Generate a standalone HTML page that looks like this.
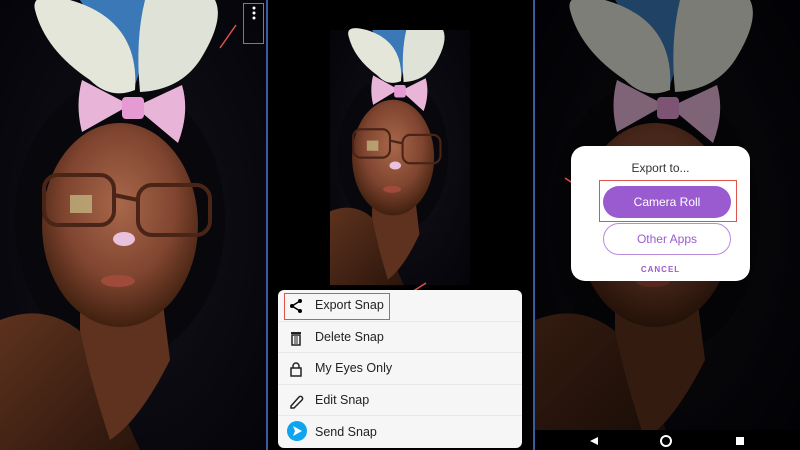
<!DOCTYPE html>
<html><head><meta charset="utf-8"><style>
*{margin:0;padding:0;box-sizing:border-box}
body{width:800px;height:450px;overflow:hidden;background:#000;font-family:"Liberation Sans",sans-serif;position:relative}
svg{position:absolute;left:0;top:0}
.menu{position:absolute;left:278px;top:290px;width:244px;height:158px;background:#f6f6f6;border-radius:6px}
.mi{height:31.6px;display:flex;align-items:center;font-size:12.5px;color:#222;border-bottom:1px solid #e8e8e8;position:relative}
.mi span{position:absolute;left:37px}
.ic{position:absolute;left:10px;top:8px}
.dlg{position:absolute;left:571px;top:146px;width:179px;height:135px;background:#fff;border-radius:14px;text-align:center}
.dlg .t{font-size:12px;color:#333;margin-top:15px}
.btn{position:absolute;left:32px;width:128px;height:32px;border-radius:16px;font-size:12px;line-height:32px}
.b1{top:40px;background:#9b5bd0;color:#fff}
.b2{top:77px;border:1px solid #b88ad9;color:#9b5bd0;line-height:30px}
.cancel{position:absolute;top:119px;width:100%;font-size:8px;font-weight:bold;letter-spacing:1px;color:#9b5bd0}
.red{position:absolute;border:1.5px solid #e0534a}
</style></head><body>
<svg width="800" height="450">
<defs>
<radialGradient id="skin" cx="50%" cy="40%" r="60%"><stop offset="0" stop-color="#a8674a"/><stop offset="0.6" stop-color="#804530"/><stop offset="1" stop-color="#40200f"/></radialGradient>
<linearGradient id="chest" x1="0" y1="0" x2="1" y2="1"><stop offset="0" stop-color="#5e321e"/><stop offset="1" stop-color="#2a150b"/></linearGradient>
<radialGradient id="bg" cx="50%" cy="50%" r="70%"><stop offset="0" stop-color="#141218"/><stop offset="1" stop-color="#04040a"/></radialGradient>
<g id="face">
<rect x="0" y="0" width="266" height="450" fill="url(#bg)"/>
<ellipse cx="120" cy="220" rx="105" ry="140" fill="#08070c"/>
<path d="M0 320 Q50 300 90 340 L140 450 L0 450Z" fill="url(#chest)"/>
<path d="M80 280 L160 280 L170 360 Q140 420 110 440 Q90 380 80 330Z" fill="#5e321e"/>
<ellipse cx="120" cy="225" rx="78" ry="102" fill="url(#skin)"/>
<path d="M80 0 L160 0 L150 40 L135 85 Z" fill="#3a78b8"/>
<path d="M35 10 Q30 -10 70 0 Q140 20 135 90 Q110 100 90 80 Q45 50 35 10Z" fill="#e4e6da"/>
<path d="M145 0 L215 0 Q225 20 200 60 Q180 90 140 92 Q135 40 145 0Z" fill="#dfe2d6"/>
<path d="M82 80 L130 105 L82 132 Q75 105 82 80Z" fill="#e8b4d8"/>
<path d="M182 85 L135 107 L178 143 Q190 112 182 85Z" fill="#e8b4d8"/>
<rect x="122" y="97" width="22" height="22" rx="4" fill="#e59ad4"/>
<g fill="none" stroke="#4a2416" stroke-width="4"><rect x="44" y="175" width="70" height="50" rx="14"/><rect x="138" y="185" width="72" height="50" rx="14"/><path d="M114 195 L138 200"/></g>
<rect x="70" y="195" width="22" height="18" fill="#c8c088" opacity="0.7"/>
<ellipse cx="124" cy="239" rx="11" ry="7" fill="#e8c2dc"/>
<ellipse cx="118" cy="281" rx="17" ry="6" fill="#a04a3a"/>
</g>
</defs>
<use href="#face"/>
<rect x="266" y="0" width="2" height="450" fill="#3c5aa0"/>
<rect x="533" y="0" width="2" height="450" fill="#3c5aa0"/>
<g transform="translate(330,30) scale(0.526,0.567)"><use href="#face"/></g>
<g transform="translate(535,0)"><use href="#face"/></g>
<rect x="535" y="0" width="265" height="450" fill="#000" opacity="0.45"/>
<rect x="535" y="430" width="265" height="20" fill="#000"/>
<path d="M590 441 L598 437 L598 445Z" fill="#fff"/>
<circle cx="666" cy="441" r="5" fill="none" stroke="#fff" stroke-width="2"/>
<rect x="736" y="437" width="8" height="8" fill="#fff"/>
<g fill="#fff"><circle cx="254" cy="8" r="1.5"/><circle cx="254" cy="13" r="1.5"/><circle cx="254" cy="18" r="1.5"/></g>
<g stroke="#e0534a" stroke-width="1.5"><line x1="220" y1="48" x2="236" y2="25"/><line x1="396" y1="302" x2="426" y2="283"/><line x1="565" y1="178" x2="592" y2="196"/></g>
</svg>
<div class="red" style="left:243px;top:3px;width:21px;height:41px"></div>
<div class="menu">
<div class="mi"><svg class="ic" width="16" height="16" viewBox="0 0 16 16"><circle cx="12" cy="3" r="2"/><circle cx="4" cy="8" r="2"/><circle cx="12" cy="13" r="2"/><path d="M12 3 L4 8 L12 13" stroke="#000" stroke-width="1.5" fill="none"/></svg><span>Export Snap</span></div>
<div class="mi"><svg class="ic" width="16" height="16" viewBox="0 0 16 16"><rect x="3" y="2" width="10" height="2" fill="#222"/><rect x="4" y="5" width="8" height="10" fill="none" stroke="#222" stroke-width="1.5"/><path d="M7 6v8M9 6v8" stroke="#222"/></svg><span>Delete Snap</span></div>
<div class="mi"><svg class="ic" width="16" height="16" viewBox="0 0 16 16"><rect x="3" y="7" width="10" height="8" fill="none" stroke="#222" stroke-width="1.5"/><path d="M5 7V5a3 3 0 0 1 6 0v2" fill="none" stroke="#222" stroke-width="1.5"/></svg><span>My Eyes Only</span></div>
<div class="mi"><svg class="ic" width="16" height="16" viewBox="0 0 16 16"><path d="M3 13 L11 4 a2 2 0 0 1 3 3 L6 15 L3 15Z" fill="none" stroke="#222" stroke-width="1.5"/></svg><span>Edit Snap</span></div>
<div class="mi" style="border:none"><svg class="ic" style="left:9px;top:5px" width="20" height="20" viewBox="0 0 20 20"><circle cx="10" cy="10" r="10" fill="#0ea5f0"/><path d="M6 5 L15 10 L6 15 L8 10Z" fill="#fff"/></svg><span>Send Snap</span></div>
</div>
<div class="red" style="left:284px;top:293px;width:106px;height:27px"></div>
<div class="dlg"><div class="t">Export to...</div><div class="btn b1">Camera Roll</div><div class="btn b2">Other Apps</div><div class="cancel">CANCEL</div></div>
<div class="red" style="left:599px;top:180px;width:138px;height:42px"></div>
</body></html>
